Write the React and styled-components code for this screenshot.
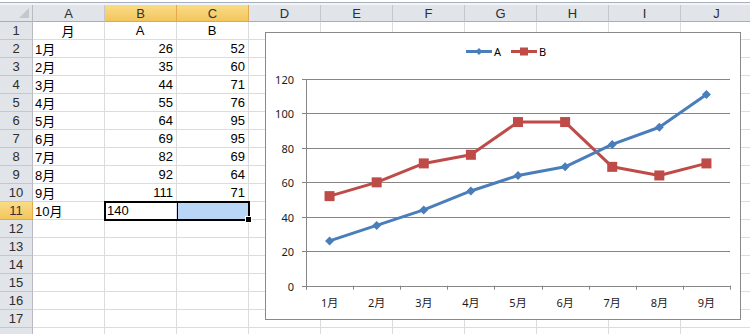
import React from 'react'
import styled, { createGlobalStyle, css } from 'styled-components'

const GlobalStyle = createGlobalStyle`
  body {
    margin: 0;
    background: #fff;
    font-family: "Liberation Sans", "Noto Sans CJK JP", sans-serif;
  }
`

const COLS = ['A', 'B', 'C', 'D', 'E', 'F', 'G', 'H', 'I', 'J']
const MONTHS = ['1月', '2月', '3月', '4月', '5月', '6月', '7月', '8月', '9月']
const A = [26, 35, 44, 55, 64, 69, 82, 92, 111]
const B = [52, 60, 71, 76, 95, 95, 69, 64, 71]

const Sheet = styled.div`
  position: relative;
  width: 750px;
  height: 334px;
  overflow: hidden;
  background: #fff;
`

const TopStrip = styled.div`
  height: 5px;
  box-sizing: border-box;
  border-top: 2px solid #fff;
  border-bottom: 2px solid #f3f4f6;
  background: #a7b1bd;
`

const Grid = styled.div`
  display: grid;
  grid-template-columns: 33px repeat(10, 72px);
  grid-template-rows: 17px repeat(18, 18px);
  font-size: 13px;
  color: #000;
`

const Corner = styled.div`
  position: relative;
  background: #e1e4e9;
  border-right: 1px solid #b8bcc2;
  border-bottom: 1px solid #a9aeb6;
  box-sizing: border-box;
  &::after {
    content: '';
    position: absolute;
    right: 3px;
    bottom: 3px;
    border-left: 10px solid transparent;
    border-bottom: 10px solid #c4c8ce;
  }
`

const selectedHead = css`
  background: linear-gradient(#f9dc86, #f3c55e);
  border-color: #e2a849;
  color: #333;
`

const ColHead = styled.div`
  box-sizing: border-box;
  background: #e1e4e9;
  border-right: 1px solid #c4c8ce;
  border-bottom: 1px solid #a9aeb6;
  color: #2d2d2d;
  display: flex;
  align-items: center;
  justify-content: center;
  line-height: 1;
  ${p => p.$selected && selectedHead}
`

const RowHead = styled.div`
  box-sizing: border-box;
  background: #e1e4e9;
  border-right: 1px solid #b8bcc2;
  border-bottom: 1px solid #c4c8ce;
  color: #2d2d2d;
  display: flex;
  align-items: center;
  justify-content: center;
  ${p => p.$selected && selectedHead}
`

const Cell = styled.div`
  box-sizing: border-box;
  border-right: 1px solid #dadcdd;
  border-bottom: 1px solid #dadcdd;
  padding: 0 3px 0 2px;
  display: flex;
  align-items: center;
  white-space: nowrap;
  justify-content: ${p =>
    p.$align === 'right' ? 'flex-end' : p.$align === 'center' ? 'center' : 'flex-start'};
  background: ${p => (p.$fill ? '#bad6f6' : 'transparent')};
`

const Selection = styled.div`
  position: absolute;
  left: 104px;
  top: 201px;
  width: 146px;
  height: 20px;
  box-sizing: border-box;
  border: 2px solid #000;
  pointer-events: none;
  &::before {
    content: '';
    position: absolute;
    left: 71px;
    top: 0;
    bottom: 0;
    border-left: 1px solid #000;
  }
  &::after {
    content: '';
    position: absolute;
    right: -4px;
    bottom: -4px;
    width: 5px;
    height: 5px;
    background: #000;
    border: 1px solid #fff;
  }
`

const ChartBox = styled.div`
  position: absolute;
  left: 265px;
  top: 32px;
  width: 476px;
  height: 288px;
  box-sizing: border-box;
  border: 1px solid #8a8a8a;
  background: #fff;
`

const cellValue = (r, c) => {
  // r: 1-based row, c: column index
  if (r === 1) {
    if (c === 0) return ['月', 'center']
    if (c === 1) return ['A', 'center']
    if (c === 2) return ['B', 'center']
    return null
  }
  const i = r - 2
  if (i >= 0 && i < 9) {
    if (c === 0) return [MONTHS[i], 'left']
    if (c === 1) return [A[i], 'right']
    if (c === 2) return [B[i], 'right']
  }
  if (r === 11) {
    if (c === 0) return ['10月', 'left']
    if (c === 1) return ['140', 'left']
  }
  return null
}

const Y0 = 252.7
const yOf = v => Y0 - v * 1.7225
const X0 = 40
const X1 = 464
const STEP = (X1 - X0) / 9
const xOf = i => X0 + (i + 0.5) * STEP

const BLUE = '#4a7ebb'
const RED = '#be4b48'

const Diamond = ({ x, y, r = 4.5 }) => (
  <polygon points={`${x},${y - r} ${x + r},${y} ${x},${y + r} ${x - r},${y}`} fill={BLUE} />
)

const Square = ({ x, y, s = 10 }) => (
  <rect x={x - s / 2} y={y - s / 2} width={s} height={s} fill={RED} />
)

const Chart = () => {
  const ptsA = A.map((v, i) => `${xOf(i)},${yOf(v)}`).join(' ')
  const ptsB = B.map((v, i) => `${xOf(i)},${yOf(v)}`).join(' ')
  return (
    <ChartBox>
      <svg width="474" height="286" style={{ display: 'block' }}>
        {/* legend */}
        <line x1="200" y1="18.5" x2="226" y2="18.5" stroke={BLUE} strokeWidth="3" />
        <Diamond x={213} y={18.5} r={3.5} />
        <text x="228" y="23" fontSize="11" fontFamily="Noto Sans, sans-serif" fill="#000">A</text>
        <line x1="245" y1="18.5" x2="271" y2="18.5" stroke={RED} strokeWidth="3" />
        <Square x={258} y={18.5} s={8} />
        <text x="273" y="23" fontSize="11" fontFamily="Noto Sans, sans-serif" fill="#000">B</text>

        {/* grid */}
        {[0, 20, 40, 60, 80, 100, 120].map(v => (
          <g key={v}>
            <line x1={X0 - 4} y1={Math.round(yOf(v)) + 0.5} x2={X1} y2={Math.round(yOf(v)) + 0.5} stroke="#868686" strokeWidth="1" />
            <text
              x="28"
              y={Math.round(yOf(v)) + 4.5}
              fontSize="11"
              textAnchor="end"
              fontFamily="Noto Sans, sans-serif"
              fill="#1a1a1a"
            >
              {v}
            </text>
          </g>
        ))}
        <line x1={X0 + 0.5} y1={yOf(120)} x2={X0 + 0.5} y2={Y0 + 4} stroke="#868686" strokeWidth="1" />
        {Array.from({ length: 10 }, (_, i) => (
          <line
            key={i}
            x1={Math.round(X0 + i * STEP) + 0.5}
            y1={Y0}
            x2={Math.round(X0 + i * STEP) + 0.5}
            y2={Y0 + 4}
            stroke="#868686"
            strokeWidth="1"
          />
        ))}
        {MONTHS.map((m, i) => (
          <text
            key={m}
            x={xOf(i)}
            y="274"
            fontSize="11"
            textAnchor="middle"
            fontFamily="Noto Sans, Noto Sans CJK JP, sans-serif"
            fill="#1a1a1a"
          >
            {m}
          </text>
        ))}

        {/* series */}
        <polyline points={ptsB} fill="none" stroke={RED} strokeWidth="3" strokeLinejoin="round" />
        {B.map((v, i) => (
          <Square key={i} x={xOf(i)} y={yOf(v)} />
        ))}
        <polyline points={ptsA} fill="none" stroke={BLUE} strokeWidth="3" strokeLinejoin="round" />
        {A.map((v, i) => (
          <Diamond key={i} x={xOf(i)} y={yOf(v)} />
        ))}
      </svg>
    </ChartBox>
  )
}

export default function App() {
  const rows = Array.from({ length: 18 }, (_, i) => i + 1)
  return (
    <Sheet>
      <GlobalStyle />
      <TopStrip />
      <Grid>
        <Corner />
        {COLS.map(c => (
          <ColHead key={c} $selected={c === 'B' || c === 'C'}>
            {c}
          </ColHead>
        ))}
        {rows.map(r => (
          <React.Fragment key={r}>
            {/* row 18 is only a sliver at the bottom edge; its number is out of view */}
            <RowHead $selected={r === 11}>{r < 18 ? r : null}</RowHead>
            {COLS.map((c, ci) => {
              const v = cellValue(r, ci)
              return (
                <Cell key={c} $align={v ? v[1] : 'left'} $fill={r === 11 && ci === 2}>
                  {v ? v[0] : null}
                </Cell>
              )
            })}
          </React.Fragment>
        ))}
      </Grid>
      <Selection />
      <Chart />
    </Sheet>
  )
}
